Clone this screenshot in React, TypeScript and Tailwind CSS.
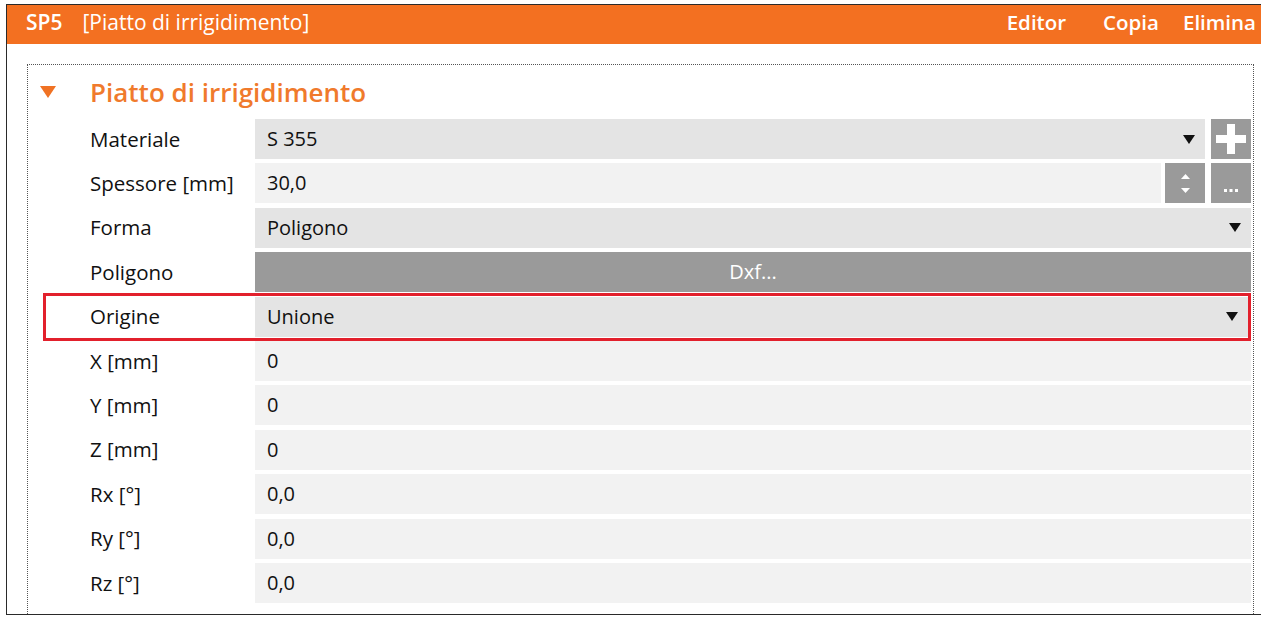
import React from 'react';

const font = { fontFamily: '"Open Sans", "Noto Sans", sans-serif' };

const DropArrow: React.FC = () => (
  <svg width="12" height="9" viewBox="0 0 12 9" className="shrink-0">
    <path d="M0 0 H12 L6 9 Z" fill="#111" />
  </svg>
);

const Label: React.FC<{ text: string }> = ({ text }) => (
  <div className="w-[165px] shrink-0 text-[20.5px] text-[#111]">{text}</div>
);

const SelectRow: React.FC<{ label: string; value: string; extra?: React.ReactNode }> = ({ label, value, extra }) => (
  <div className="flex h-[40px] items-center">
    <Label text={label} />
    <div className="flex h-full flex-1 items-center justify-between bg-[#e4e4e4] pl-[12px] pr-[10px] text-[20px] text-[#111]">
      <span>{value}</span>
      <DropArrow />
    </div>
    {extra}
  </div>
);

const TextRow: React.FC<{ label: string; value: string }> = ({ label, value }) => (
  <div className="flex h-[40px] items-center">
    <Label text={label} />
    <div className="flex h-full flex-1 items-center bg-[#f2f2f2] pl-[12px] text-[20px] text-[#111]">{value}</div>
  </div>
);

const PlusButton: React.FC = () => (
  <div className="ml-[6px] flex h-full w-[40px] items-center justify-center bg-[#9a9a9a]">
    <svg width="30" height="30" viewBox="0 0 30 30">
      <rect x="11" y="0" width="8" height="30" fill="#fff" />
      <rect x="0" y="11" width="30" height="8" fill="#fff" />
    </svg>
  </div>
);

const SpinButton: React.FC = () => (
  <div className="ml-[4px] flex h-full w-[40px] flex-col items-center justify-center gap-[9px] bg-[#9a9a9a]">
    <svg width="9" height="5" viewBox="0 0 9 5">
      <path d="M0 5 L4.5 0 L9 5 Z" fill="#fff" />
    </svg>
    <svg width="9" height="5" viewBox="0 0 9 5">
      <path d="M0 0 H9 L4.5 5 Z" fill="#fff" />
    </svg>
  </div>
);

const DotsButton: React.FC = () => (
  <div className="ml-[6px] flex h-full w-[40px] items-end justify-center bg-[#9a9a9a] pb-[10px]">
    <svg width="14" height="4" viewBox="0 0 14 4">
      <rect x="0" y="0" width="3" height="3" fill="#fff" />
      <rect x="5.5" y="0" width="3" height="3" fill="#fff" />
      <rect x="11" y="0" width="3" height="3" fill="#fff" />
    </svg>
  </div>
);

export default function App() {
  return (
    <div className="h-[621px] w-[1261px] overflow-hidden bg-white pl-[6px] pt-[4px]" style={font}>
      <div className="h-[611px] overflow-hidden border-b border-l border-t border-[#2a2a2a]">
        {/* header */}
        <div className="flex h-[39px] items-center bg-[#f37021] pb-[4px] pl-[19px] pr-[5px] text-white">
          <span className="text-[21px] font-semibold">SP5</span>
          <span className="ml-[20px] text-[21px]">[Piatto di irrigidimento]</span>
          <div className="flex-1" />
          <span className="text-[20.5px] font-semibold">Editor</span>
          <span className="ml-[37px] text-[20.5px] font-semibold">Copia</span>
          <span className="ml-[24px] text-[20.5px] font-semibold">Elimina</span>
        </div>

        <div className="pl-[20px] pt-[20px] pr-[7px]">
          <div className="h-[600px] border-[1.5px] border-dotted border-[#555] pr-[2px]">
            <div className="flex h-[54px] items-center">
              <svg width="16" height="12" viewBox="0 0 16 12" className="ml-[12px]">
                <path d="M0 0 H16 L8 12 Z" fill="#f07224" />
              </svg>
              <span className="ml-[34px] text-[26px] font-semibold text-[#f07a2c]">Piatto di irrigidimento</span>
            </div>

            <div className="ml-[62px] flex flex-col gap-[4.4px]">
              <SelectRow label="Materiale" value="S 355" extra={<PlusButton />} />
              <div className="flex h-[40px] items-center">
                <Label text="Spessore [mm]" />
                <div className="flex h-full flex-1 items-center bg-[#f2f2f2] pl-[12px] text-[20px] text-[#111]">30,0</div>
                <SpinButton />
                <DotsButton />
              </div>
              <SelectRow label="Forma" value="Poligono" />
              <div className="flex h-[40px] items-center">
                <Label text="Poligono" />
                <div className="flex h-full flex-1 items-center justify-center bg-[#9a9a9a] text-[20px] text-white">Dxf...</div>
              </div>
              <div className="-ml-[47px] -my-[4px] border-[3px] border-[#e2202c] py-[1px] pl-[44px]">
                <SelectRow label="Origine" value="Unione" />
              </div>
              <TextRow label="X [mm]" value="0" />
              <TextRow label="Y [mm]" value="0" />
              <TextRow label="Z [mm]" value="0" />
              <TextRow label="Rx [°]" value="0,0" />
              <TextRow label="Ry [°]" value="0,0" />
              <TextRow label="Rz [°]" value="0,0" />
            </div>
          </div>
        </div>
      </div>
    </div>
  );
}
